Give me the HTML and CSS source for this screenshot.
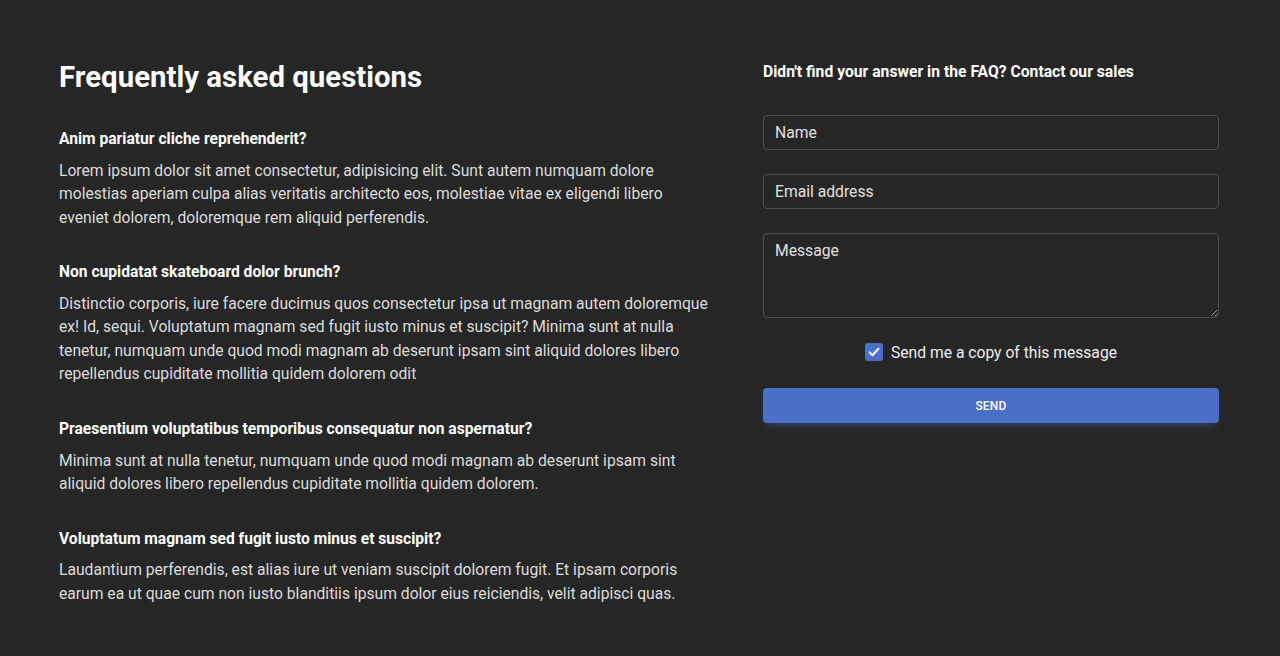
FILE: index.html
```html
<!DOCTYPE html>
<html lang="en">
<head>
<meta charset="utf-8">
<title>FAQ</title>
<link rel="stylesheet" href="styles.css">
</head>
<body>
<main class="page">
  <section class="faq">
    <h2 class="faq-title">Frequently asked questions</h2>
    <div class="qa">
      <h6 class="q">Anim pariatur cliche reprehenderit?</h6>
      <p class="a">Lorem ipsum dolor sit amet consectetur, adipisicing elit. Sunt autem numquam dolore molestias aperiam culpa alias veritatis architecto eos, molestiae vitae ex eligendi libero eveniet dolorem, doloremque rem aliquid perferendis.</p>
    </div>
    <div class="qa">
      <h6 class="q">Non cupidatat skateboard dolor brunch?</h6>
      <p class="a">Distinctio corporis, iure facere ducimus quos consectetur ipsa ut magnam autem doloremque ex! Id, sequi. Voluptatum magnam sed fugit iusto minus et suscipit? Minima sunt at nulla tenetur, numquam unde quod modi magnam ab deserunt ipsam sint aliquid dolores libero repellendus cupiditate mollitia quidem dolorem odit</p>
    </div>
    <div class="qa">
      <h6 class="q">Praesentium voluptatibus temporibus consequatur non aspernatur?</h6>
      <p class="a">Minima sunt at nulla tenetur, numquam unde quod modi magnam ab deserunt ipsam sint aliquid dolores libero repellendus cupiditate mollitia quidem dolorem.</p>
    </div>
    <div class="qa">
      <h6 class="q">Voluptatum magnam sed fugit iusto minus et suscipit?</h6>
      <p class="a">Laudantium perferendis, est alias iure ut veniam suscipit dolorem fugit. Et ipsam corporis earum ea ut quae cum non iusto blanditiis ipsum dolor eius reiciendis, velit adipisci quas.</p>
    </div>
  </section>
  <section class="contact">
    <h6 class="contact-title">Didn't find your answer in the FAQ? Contact our sales</h6>
    <form class="form">
      <input class="field" type="text" placeholder="Name">
      <input class="field" type="email" placeholder="Email address">
      <textarea class="field area" placeholder="Message"></textarea>
      <label class="check-row">
        <span class="check-box">
          <svg viewBox="0 0 18 18" width="18" height="18"><path d="M4.6 9.4l2.9 2.8 5.9-6.4" fill="none" stroke="#fff" stroke-width="2" stroke-linecap="round" stroke-linejoin="round"/></svg>
        </span>
        <span class="check-label">Send me a copy of this message</span>
      </label>
      <button class="send" type="button">Send</button>
    </form>
  </section>
</main>
</body>
</html>
```

FILE: styles.css
```css
* { box-sizing: border-box; }
html, body {
  margin: 0;
  background: #262626;
  font-family: Roboto, "Liberation Sans", sans-serif;
  color: #e0e0e0;
}
.page {
  display: grid;
  grid-template-columns: 656px 456px;
  column-gap: 48px;
  padding: 60px 0 0 59px;
}
.faq-title {
  margin: 0 0 34px;
  font-size: 29.4px;
  line-height: 34px;
  font-weight: 700;
  color: #fff;
}
.qa { margin-bottom: 32px; }
.q {
  margin: 0 0 7.7px;
  font-size: 15.6px;
  line-height: 23px;
  font-weight: 700;
  color: #fff;
}
.a {
  margin: 0;
  font-size: 15.66px;
  line-height: 23.5px;
  color: #dcdcdc;
}
.contact-title {
  margin: 0 0 32px;
  font-size: 15.7px;
  line-height: 23px;
  font-weight: 700;
  color: #fff;
}
.form { display: flex; flex-direction: column; }
.field {
  display: block;
  width: 100%;
  height: 35px;
  margin: 0 0 24px;
  padding: 6px 11px;
  background: transparent;
  border: 1px solid #4f4f4f;
  border-radius: 4px;
  font-family: inherit;
  font-size: 15.7px;
  line-height: 22px;
  color: #e0e0e0;
  outline: none;
}
.field::placeholder { color: #e0e0e0; opacity: 1; }
.area { height: 85px; margin-bottom: 0; resize: vertical; }
.check-row {
  display: flex;
  align-items: center;
  justify-content: center;
  gap: 8px;
  margin: 22px 0 24px;
  height: 24px;
}
.check-box {
  width: 18px;
  height: 18px;
  border-radius: 3px;
  background: #4a70c8;
  display: flex;
  align-items: center;
  justify-content: center;
}
.check-label { font-size: 15.66px; color: #eee; }
.send {
  height: 35px;
  width: 100%;
  border: 0;
  border-radius: 4px;
  background: #4a6fc7;
  color: #fff;
  font-family: inherit;
  font-size: 12px;
  font-weight: 500;
  text-transform: uppercase;
  letter-spacing: 0.2px;
  box-shadow: 0 4px 9px -4px rgba(74, 111, 199, 0.6);
}
```
